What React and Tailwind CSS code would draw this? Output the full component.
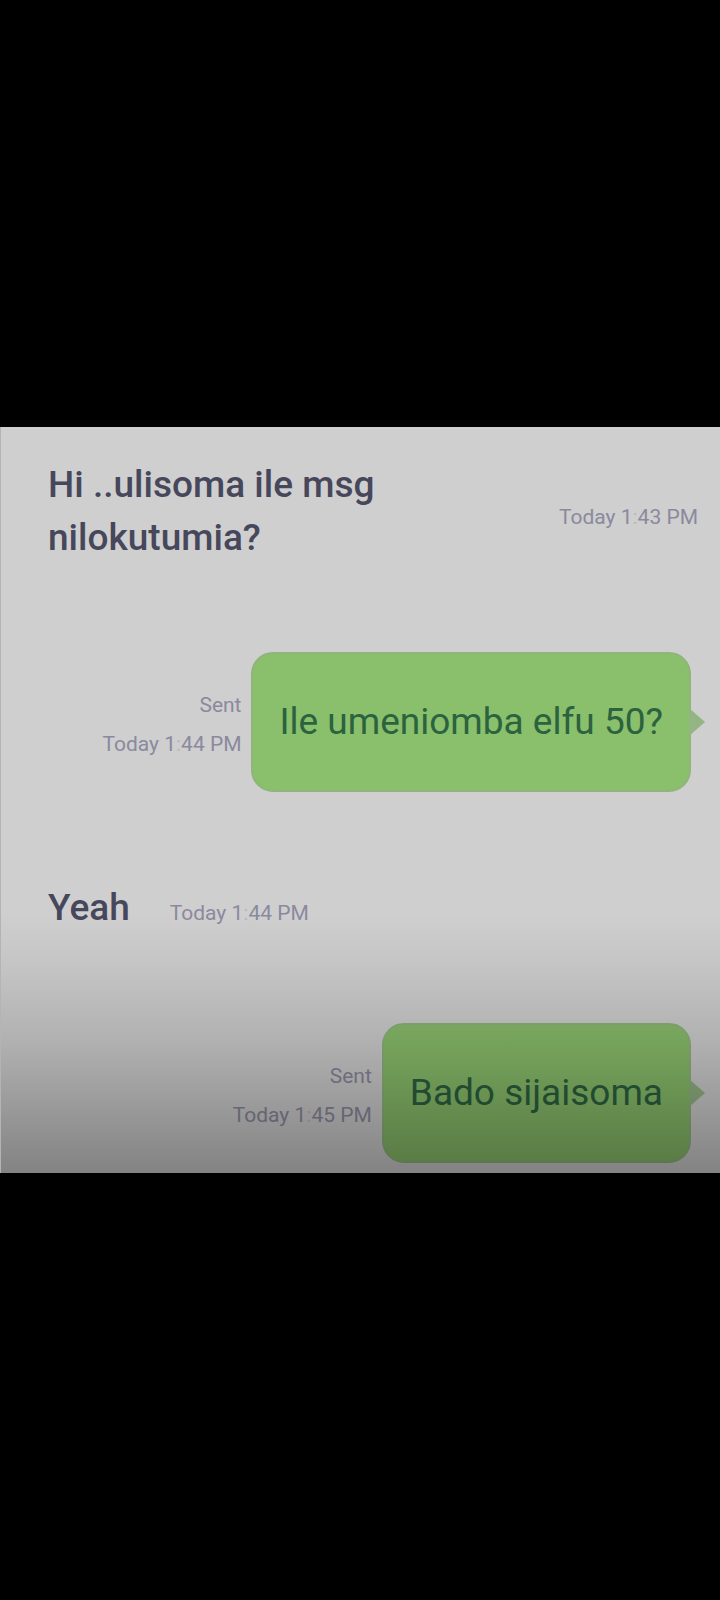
function Stamp({ time }) {
  const [hour, minute] = time.split(":");
  return (
    <time className="whitespace-nowrap text-[21px] leading-[39px] text-[#8b899e]">
      Today {hour}
      <span className="opacity-30">:</span>
      {minute}
    </time>
  );
}

function Received({ text, time, className, textClassName }) {
  return (
    <li className={`flex items-center pl-[47px] pr-[22px] ${className}`}>
      <p className={`text-[37px] font-medium leading-[53px] text-[#47475c] ${textClassName}`}>
        {text}
      </p>
      <div className="flex pt-3">
        <Stamp time={time} />
      </div>
    </li>
  );
}

function Sent({ text, time, className }) {
  return (
    <li className={`flex items-center justify-end gap-[10px] pr-[29px] ${className}`}>
      <div className="flex flex-col items-end pt-[6px]">
        <span className="text-[21px] leading-[39px] text-[#8b899e]">Sent</span>
        <Stamp time={time} />
      </div>
      <div className="relative rounded-[22px] border-2 border-[#8fb57c] bg-[#8abf6b] px-[26px] py-[42px]">
        <p className="whitespace-nowrap text-[37px] leading-[52px] text-[#2b6240]">
          {text}
        </p>
        <svg
          className="absolute top-1/2 left-full h-7 w-4 -translate-y-1/2"
          viewBox="0 0 16 28"
          aria-hidden="true"
        >
          <path d="M0 0 L16 14 L0 28 Z" fill="#92b583" />
        </svg>
      </div>
    </li>
  );
}

export default function App() {
  return (
    <main className="flex min-h-screen flex-col justify-center bg-black font-['Roboto','Liberation_Sans',sans-serif]">
      <section className="relative border-l border-[#b4b4b4] bg-[#cfcfcf] pt-[31px] pb-[10px]">
        <ul>
          <Received
            text="Hi ..ulisoma ile msg nilokutumia?"
            time="1:43 PM"
            className="justify-between"
            textClassName="max-w-[360px]"
          />
          <Sent text="Ile umeniomba elfu 50?" time="1:44 PM" className="mt-[88px]" />
          <Received text="Yeah" time="1:44 PM" className="mt-[89px] gap-10" textClassName="" />
          <Sent text="Bado sijaisoma" time="1:45 PM" className="mt-[89px]" />
        </ul>
        <div className="pointer-events-none absolute inset-x-0 bottom-0 h-[260px] bg-[linear-gradient(to_bottom,transparent,rgba(0,0,0,0.05)_20%,rgba(0,0,0,0.15)_50%,rgba(0,0,0,0.37))]" />
      </section>
    </main>
  );
}
